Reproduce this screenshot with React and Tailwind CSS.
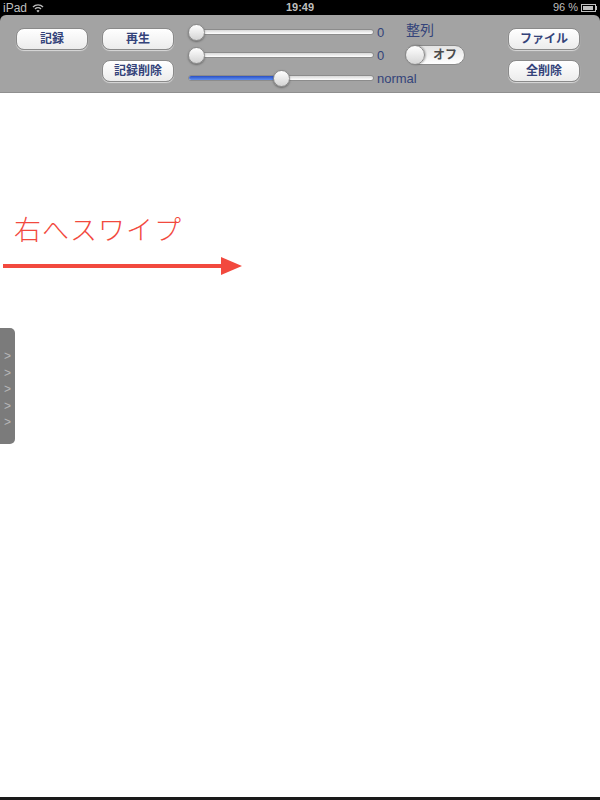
import React from 'react';

const jp = { fontFamily: '"Liberation Sans", "Noto Sans CJK JP", sans-serif' };

function PillButton({ children }) {
  return (
    <button
      className="w-[72px] h-[22px] rounded-[8px] bg-gradient-to-b from-white to-[#ececec] border border-[#8a8a8a] shadow-[0_1px_1px_rgba(255,255,255,0.6)] text-[12px] font-bold text-[#34437a] leading-none flex items-center justify-center"
      style={jp}
    >
      {children}
    </button>
  );
}

function Slider({ pct }) {
  return (
    <div className="relative shrink-0 w-[186px] h-[16px] flex items-center">
      <div className="w-full h-[6px] rounded-full bg-gradient-to-b from-[#d8d8d8] to-white border border-[#8c8c8c] overflow-hidden">
        <div
          className="h-full bg-gradient-to-b from-[#2a4fc4] to-[#5f8ef0]"
          style={{ width: `${pct}%` }}
        />
      </div>
      <div
        className="absolute top-0 w-[17px] h-[17px] rounded-full bg-gradient-to-b from-white to-[#d4d4d4] border border-[#8a8a8a] shadow-[0_1px_2px_rgba(0,0,0,0.35)]"
        style={{ left: `calc(${pct}% - ${pct * 0.17}px)` }}
      />
    </div>
  );
}

function SliderRow({ pct, label }) {
  return (
    <div className="flex items-center h-[16px]">
      <Slider pct={pct} />
      <span className="ml-[3px] text-[13px] text-[#34437a] leading-none whitespace-nowrap" style={jp}>
        {label}
      </span>
    </div>
  );
}

function StatusBar() {
  return (
    <div className="h-[15px] bg-black flex items-center justify-between px-[3px] text-[11px] text-[#bfbfbf] leading-none" style={jp}>
      <div className="flex items-center gap-[5px] w-[100px]">
        <span className="text-[12px]">iPad</span>
        <svg width="12" height="10" viewBox="0 0 12 10">
          <path d="M1 4 A7 7 0 0 1 11 4" stroke="#bfbfbf" strokeWidth="1.4" fill="none" />
          <path d="M3 6 A4.3 4.3 0 0 1 9 6" stroke="#bfbfbf" strokeWidth="1.4" fill="none" />
          <path d="M6 9.5 L4.4 7.8 A2.2 2.2 0 0 1 7.6 7.8 Z" fill="#bfbfbf" />
        </svg>
      </div>
      <span className="font-bold">19:49</span>
      <div className="flex items-center justify-end gap-[3px] w-[100px]">
        <span>96 %</span>
        <div className="flex items-center">
          <div className="w-[15px] h-[8px] border border-[#bfbfbf] p-[1px]">
            <div className="h-full w-[92%] bg-[#bfbfbf]" />
          </div>
          <div className="w-[1px] h-[4px] bg-[#bfbfbf]" />
        </div>
      </div>
    </div>
  );
}

function Toolbar() {
  return (
    <div className="bg-black">
      <div className="h-[78px] rounded-t-[6px] bg-[#a3a3a3] border-b border-[#8f8f8f] flex pl-[16px]">
        <div className="pt-[13px]">
          <PillButton>記録</PillButton>
        </div>
        <div className="ml-[14px] pt-[13px] flex flex-col gap-[10px]">
          <PillButton>再生</PillButton>
          <PillButton>記録削除</PillButton>
        </div>
        <div className="ml-[14px] w-[217px] shrink-0 pt-[9px] flex flex-col gap-[7px]">
          <SliderRow pct={0} label="0" />
          <SliderRow pct={0} label="0" />
          <SliderRow pct={50} label="normal" />
        </div>
        <div className="w-[60px] shrink-0 pt-[8px] flex flex-col">
          <span className="ml-[1px] text-[14px] text-[#34437a] leading-none" style={jp}>整列</span>
          <div className="mt-[8px] w-[60px] h-[20px] rounded-full bg-gradient-to-b from-[#e4e4e4] to-white border border-[#8a8a8a] relative flex items-center">
            <div className="absolute left-[-1px] top-[-1px] w-[20px] h-[20px] rounded-full bg-gradient-to-b from-white to-[#d6d6d6] border border-[#8a8a8a] shadow-[1px_0_2px_rgba(0,0,0,0.3)]" />
            <span className="ml-[27px] text-[12px] font-bold text-[#4a4a4a] leading-none" style={jp}>オフ</span>
          </div>
        </div>
        <div className="ml-[43px] pt-[13px] flex flex-col gap-[10px]">
          <PillButton>ファイル</PillButton>
          <PillButton>全削除</PillButton>
        </div>
      </div>
    </div>
  );
}

function SideTab() {
  return (
    <div className="absolute left-0 top-[235px] w-[15px] h-[116px] rounded-r-[5px] bg-[#7b7b7b] flex flex-col items-center pt-[21px] gap-[2px]">
      {[0, 1, 2, 3, 4].map((i) => (
        <span key={i} className="text-[12px] text-[#b8b8b8] leading-[14.5px]" style={jp}>&gt;</span>
      ))}
    </div>
  );
}

export default function App() {
  return (
    <div className="w-[600px] h-[800px] bg-white flex flex-col overflow-hidden">
      <StatusBar />
      <Toolbar />
      <div className="flex-1 relative">
        <div className="pt-[122px] pl-[14px]">
          <span
            className="text-[27px] text-[#f2493e] tracking-[1px] leading-none"
            style={{ fontFamily: '"Noto Sans CJK JP", sans-serif', fontWeight: 300 }}
          >
            右へスワイプ
          </span>
        </div>
        <div className="mt-[10px] ml-[3px] flex items-center">
          <svg width="240" height="20" viewBox="0 0 240 20">
            <rect x="0" y="8" width="220" height="4" fill="#f2493e" />
            <path d="M218 1 L239 10 L218 19 Z" fill="#f2493e" />
          </svg>
        </div>
        <SideTab />
      </div>
      <div className="h-[3px] bg-[#1a1a1a]" />
    </div>
  );
}
